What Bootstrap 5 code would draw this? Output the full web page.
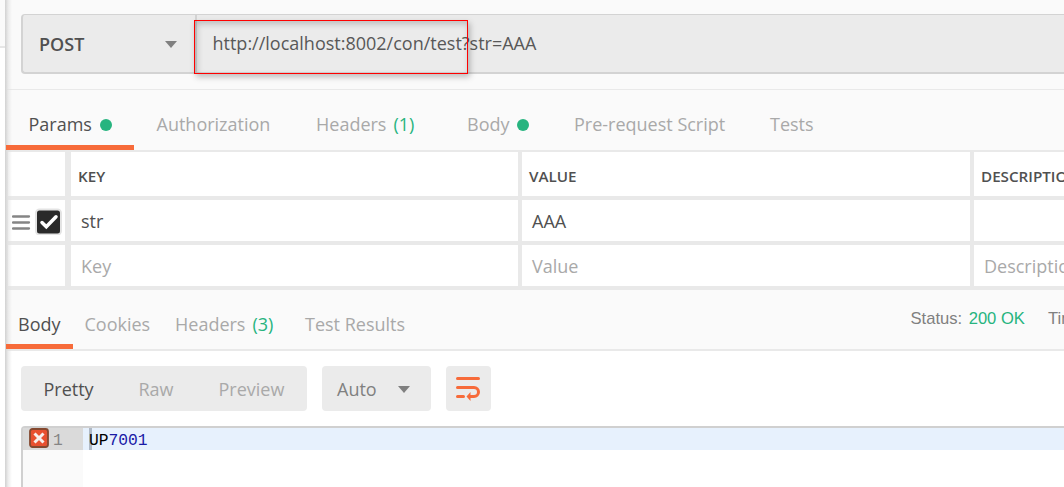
<!DOCTYPE html>
<html lang="en">
<head>
<meta charset="utf-8">
<meta name="viewport" content="width=device-width, initial-scale=1">
<title>POST request</title>
<link href="https://cdn.jsdelivr.net/npm/bootstrap@5.3.0/dist/css/bootstrap.min.css" rel="stylesheet">
<style>
  :root { --line:#e9e9e9; --orange:#f76b3a; --green:#27b47f; --ink:#505050; --mute:#a9a9a9; }
  body { font-family:"Open Sans","Noto Sans",sans-serif; font-size:18px; line-height:24px; color:var(--ink); background:#fff; }
  .shell { width:1064px; height:487px; }
  .side { width:6px; }
  .side-top { height:48px; background:#fafafa; border-right:1px solid #e4e4e4; border-bottom:2px solid #e6e6e6; }
  .edge { left:5px; top:0; width:7px; height:487px; background:linear-gradient(90deg,#d2d2d2 0,#dcdcdc 20%,rgba(225,225,225,.6) 45%,rgba(250,250,250,0) 100%); pointer-events:none; }
  .pane { width:1058px; }
  .request { height:90px; padding:14px 0 0 15px; background:#fafafa; border-bottom:1px solid var(--line); }
  .urlbar { height:60px; background:#ebebeb; border:solid #d3d3d3; border-width:1px 0 2px 2px; border-radius:4px 0 0 4px; }
  .method { width:174px; border-right:2px solid #d3d3d3; padding:0 18px 0 16px; font-weight:600; }
  .method svg { margin-top:2px; }
  .address { padding:0 0 2px 15.5px; color:#585858; }
  .marker { left:194px; top:20px; width:274px; height:54px; border:1px solid #f00; box-shadow:2px 3px 6px rgba(0,0,0,.25), inset 2px 3px 6px rgba(0,0,0,.2); }
  .tabs { display:grid; color:var(--mute); background:#fafafa; border-bottom:2px solid var(--line); }
  .req-tabs { height:62px; grid-template-columns:150.5px 159.5px 151px 107px 196px 1fr; }
  .res-tabs { height:61px; grid-template-columns:78.5px 90.5px 130px 605.5px 1fr; }
  .tabs > div { white-space:nowrap; display:flex; align-items:center; padding-top:8px; }
  .current { color:var(--ink); position:relative; z-index:1; }
  .current::after { content:""; position:absolute; left:0; bottom:0; height:5px; width:var(--bar); background:var(--orange); }
  .dot { width:12px; height:12px; border-radius:50%; background:var(--green); margin-left:8px; margin-top:2px; }
  .count { color:var(--green); margin-left:7px; }
  .params { display:grid; grid-template-columns:61px 447px 448px 90px; grid-template-rows:44px 41px 41px; gap:4px; height:138px; padding-bottom:4px; background:var(--line); overflow:hidden; }
  .params > div { background:#fff; white-space:nowrap; overflow:hidden; display:flex; align-items:center; padding-left:10px; }
  .params > .th { font-size:15.2px; font-weight:600; padding:3px 0 0 7px; }
  .params > .ctl { padding-left:6px; border-right:2px solid var(--line); border-left:2px solid var(--line); }
  .params .ghost { color:var(--mute); }
  .tabs > .status { font-family:"Liberation Sans",Arial,sans-serif; font-size:16.6px; color:#808080; padding-top:0; padding-bottom:1px; }
  .status .count { margin-left:6.5px; }
  .tools { height:75px; padding:15px 0 0 15px; gap:15px; }
  .tool { height:45px; background:#ebebeb; border-radius:4px; display:flex; align-items:center; }
  .modes { width:286px; display:grid; grid-template-columns:95px 80px 1fr; padding-left:22.5px; color:var(--mute); }
  .auto { width:109px; padding:0 21px 0 15px; color:#808080; }
  .auto svg { margin-top:2px; }
  .editor { height:61px; margin-left:15px; border:solid #d0d0d0; border-width:2px 0 0 2px; border-radius:4px 0 0 0; font-family:"Liberation Mono",monospace; font-size:16.3px; line-height:22px; }
  .gutter { width:60px; background:#fafafa; }
  .line-no { height:22px; background:#dadada; color:#858585; padding-left:6px; }
  .code { height:22px; background:#e7f1fd; padding-left:6px; color:#000; line-height:25px; }
  .caret { left:6px; top:0; width:3px; height:22px; background:#afb9c6; }
  .code span { position:relative; }
  .num { color:#1a1aa6; }
</style>
</head>
<body>
<div class="shell d-flex position-relative overflow-hidden">
  <aside class="side flex-shrink-0"><div class="side-top"></div></aside>
  <div class="edge position-absolute z-1"></div>
  <main class="pane flex-shrink-0">
    <div class="request">
      <div class="urlbar d-flex">
        <div class="method d-flex align-items-center justify-content-between"><span>POST</span>
          <svg width="12" height="7"><path d="M0 0h12L6 7z" fill="#808080"/></svg></div>
        <div class="address d-flex align-items-center">http://localhost:8002/con/test?str=AAA</div>
      </div>
    </div>
    <div class="tabs req-tabs">
      <div class="current" style="--bar:128px;padding-left:22.5px">Params<i class="dot"></i></div>
      <div>Authorization</div>
      <div>Headers<span class="count">(1)</span></div>
      <div>Body<i class="dot" style="margin-left:7px"></i></div>
      <div>Pre-request Script</div>
      <div>Tests</div>
    </div>
    <div class="params">
      <div class="ctl"></div><div class="th">KEY</div><div class="th">VALUE</div><div class="th">DESCRIPTION</div>
      <div class="ctl">
        <svg width="50" height="28" viewBox="12 208 50 28" style="margin-left:-2px">
          <path d="M13 217.500h16M13 223.500h16M13 229.500h16" stroke="#858585" stroke-width="2.300" stroke-linecap="round"/>
          <rect x="36" y="210.500" width="25" height="25" rx="3.500" fill="#2a2a2a" stroke="#e4e4e4" stroke-width="2"/>
          <path d="m42 223.500 4.300 4.300 9.700-10" fill="none" stroke="#fff" stroke-width="3.500" stroke-linecap="round"/>
        </svg>
      </div><div>str</div><div>AAA</div><div></div>
      <div class="ctl"></div><div class="ghost">Key</div><div class="ghost">Value</div><div class="ghost">Description</div>
    </div>
    <div class="tabs res-tabs">
      <div class="current" style="--bar:67px;padding-left:12px">Body</div>
      <div>Cookies</div>
      <div>Headers<span class="count">(3)</span></div>
      <div>Test Results</div>
      <div class="status">Status:<span class="count">200 OK</span><span style="margin-left:23px">Time:</span></div>
    </div>
    <div class="tools d-flex">
      <div class="tool modes"><span style="color:var(--ink)">Pretty</span><span>Raw</span><span>Preview</span></div>
      <div class="tool auto justify-content-between">Auto<svg width="12" height="7"><path d="M0 0h12L6 7z" fill="#808080"/></svg></div>
      <div class="tool">
        <svg width="45" height="45" viewBox="446 366 45 45" fill="none" stroke="#f76b3a" stroke-width="3" stroke-linecap="round">
          <path d="M457.500 378.500h17M474.500 378.500h4M457.500 387.500H474a4.500 4.500 0 0 1 0 9h-4M457.500 396.500h6"/>
          <path d="M466.500 396.500l4-4.500v9z" fill="#f76b3a" stroke="none"/>
        </svg>
      </div>
    </div>
    <div class="editor d-flex">
      <div class="gutter">
        <div class="line-no d-flex align-items-center">
          <svg width="20" height="20" viewBox="0 0 20 20" style="margin-top:-2px">
            <rect x="1" y="1" width="18" height="18" rx="2.500" fill="#e8502f" stroke="#84482f" stroke-width="1.800"/>
            <path d="M5.500 5.500l9 9M14.500 5.500l-9 9" stroke="#f7efec" stroke-width="3"/>
          </svg><span style="margin:3px 0 0 4px">1</span>
        </div>
      </div>
      <div class="code flex-grow-1 position-relative"><i class="caret position-absolute"></i><span>UP</span><span class="num">7001</span></div>
    </div>
  </main>
  <div class="marker position-absolute"></div>
</div>
<script src="https://cdn.jsdelivr.net/npm/bootstrap@5.3.0/dist/js/bootstrap.bundle.min.js"></script>
</body>
</html>
